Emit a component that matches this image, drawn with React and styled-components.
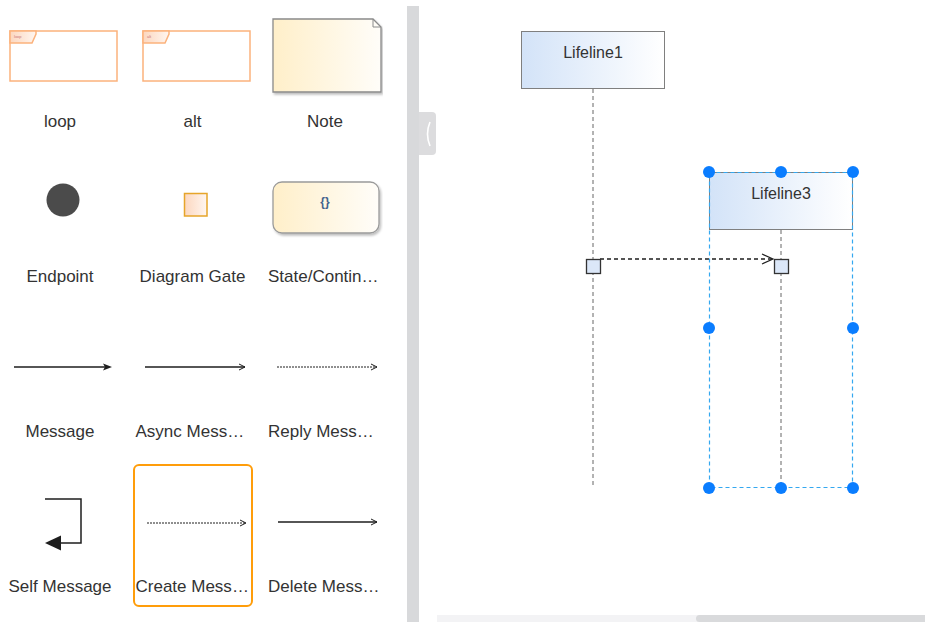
import React from 'react'
import styled, { createGlobalStyle } from 'styled-components'

const GlobalStyle = createGlobalStyle`
  html, body {
    margin: 0;
    padding: 0;
    background: #fff;
  }
  body {
    font-family: "Liberation Sans", Arial, sans-serif;
  }
`

const Shell = styled.div`
  display: flex;
  width: 925px;
  height: 622px;
  overflow: hidden;
  background: #fff;
`

const Palette = styled.div`
  width: 407px;
  flex-shrink: 0;
  overflow: hidden;
`

const Grid = styled.div`
  display: grid;
  grid-template-columns: repeat(3, 120px);
  grid-auto-rows: 143px;
  column-gap: 12.5px;
  row-gap: 12px;
  margin-top: -1px;
`

const Tile = styled.div`
  box-sizing: border-box;
  display: flex;
  flex-direction: column;
  border: 2px solid ${p => (p.$selected ? '#ff9d0a' : 'transparent')};
  border-radius: 6px;
  > svg {
    display: block;
    flex-shrink: 0;
  }
`

const Label = styled.div`
  height: 35px;
  line-height: 34px;
  padding: 0 1px;
  font-size: 17px;
  color: #333;
  text-align: center;
  white-space: nowrap;
  overflow: hidden;
  text-overflow: ellipsis;
`

const Splitter = styled.div`
  width: 12px;
  margin-top: 6px;
  flex-shrink: 0;
  background: #d8d9db;
`

const Canvas = styled.div`
  position: relative;
  flex: 1;
  display: flex;
  flex-direction: column;
`

const Stage = styled.div`
  position: relative;
  flex: 1;
`

const ScrollTrack = styled.div`
  display: flex;
  height: 7px;
  margin-left: 18px;
  background: #f3f3f5;
`

const ScrollThumb = styled.div`
  margin-left: 259px;
  flex: 1;
  background: #d9dadc;
  border-radius: 4px 0 0 4px;
`

const CollapseTab = styled.div`
  position: absolute;
  left: 0;
  top: 112px;
  width: 17px;
  height: 43px;
  background: #dcdcde;
  border-radius: 0 4px 4px 0;
  display: flex;
  align-items: center;
  justify-content: center;
`

const LifelineWrap = styled.div`
  position: absolute;
  display: flex;
  flex-direction: column;
  align-items: center;
  width: 144px;
  svg {
    display: block;
  }
`

const LifelineHead = styled.div`
  box-sizing: border-box;
  width: 144px;
  height: 58px;
  padding-top: 11px;
  border: 1px solid #7f7f7f;
  background: linear-gradient(to right, #d3e3f8, #ffffff);
  font-size: 16px;
  line-height: 20px;
  color: #333;
  text-align: center;
`

const Selection = styled.div`
  position: absolute;
  > svg {
    position: absolute;
    left: -1px;
    top: -1px;
    overflow: visible;
  }
`

const Handle = styled.span`
  position: absolute;
  width: 12px;
  height: 12px;
  margin: -6px 0 0 -6px;
  border-radius: 50%;
  background: #0a7dff;
`

const Overlay = styled.svg`
  position: absolute;
  left: 0;
  top: 0;
  pointer-events: none;
`

const INK = '#1e1e1e'

const Icon = ({ children }) => (
  <svg width="116" height="104" viewBox="2 2 116 104">
    <defs>
      <linearGradient id="warm" x1="0" x2="1" y1="0" y2="0">
        <stop offset="0" stopColor="#ffefc9" />
        <stop offset="1" stopColor="#fffdf9" />
      </linearGradient>
      <linearGradient id="peach" x1="0" x2="1" y1="0" y2="0">
        <stop offset="0" stopColor="#fcd7bf" />
        <stop offset="1" stopColor="#fff6f0" />
      </linearGradient>
      <filter id="soft" x="-10%" y="-10%" width="130%" height="140%">
        <feDropShadow dx="1.5" dy="2" stdDeviation="1" floodColor="#000" floodOpacity="0.25" />
      </filter>
    </defs>
    {children}
  </svg>
)

const Fragment = ({ tag }) => (
  <Icon>
    <rect x="10" y="32" width="107" height="50" fill="#fff" stroke="#fbb27c" strokeWidth="1.5" />
    <path d="M10 32 H36 V35 L32 44 H10 Z" fill="url(#peach)" stroke="#fbb27c" strokeWidth="1.5" />
    <text x="14" y="38.5" fontSize="4" fill="#c77">{tag}</text>
  </Icon>
)

const Arrow = ({ y, from, to, dotted, filled }) => (
  <Icon>
    <line
      x1={from}
      y1={y}
      x2={filled ? to - 6 : to}
      y2={y}
      stroke={INK}
      strokeWidth={dotted ? 1 : 1.5}
      strokeDasharray={dotted ? '2 1' : undefined}
    />
    {filled ? (
      <path d={`M${to} ${y} L${to - 9} ${y - 3.5} L${to - 7} ${y} L${to - 9} ${y + 3.5} Z`} fill={INK} />
    ) : (
      <path d={`M${to - 6} ${y - 3} L${to} ${y} L${to - 6} ${y + 3}`} fill="none" stroke={INK} strokeWidth="1" />
    )}
  </Icon>
)

const items = [
  { name: 'loop', icon: <Fragment tag="loop" /> },
  { name: 'alt', icon: <Fragment tag="alt" /> },
  {
    name: 'Note',
    icon: (
      <Icon>
        <g filter="url(#soft)">
          <path d="M8 20 H108 L116 28 V93 H8 Z" fill="url(#warm)" stroke="#8a8a8a" strokeWidth="1.3" />
        </g>
        <path d="M108 20 V28 H116" fill="none" stroke="#8a8a8a" strokeWidth="1" />
      </Icon>
    ),
  },
  {
    name: 'Endpoint',
    icon: (
      <Icon>
        <circle cx="63" cy="46" r="16.5" fill="#4b4b4b" />
      </Icon>
    ),
  },
  {
    name: 'Diagram Gate',
    icon: (
      <Icon>
        <rect x="51.5" y="39.5" width="22.5" height="22.5" fill="url(#peach)" stroke="#e6a52a" strokeWidth="1.5" />
      </Icon>
    ),
  },
  {
    name: 'State/Continuation',
    icon: (
      <Icon>
        <rect x="8" y="28" width="106" height="51" rx="9" fill="url(#warm)" stroke="#9a9a9a" strokeWidth="1.3" filter="url(#soft)" />
        <text x="60" y="52" fontSize="12" fontWeight="bold" textAnchor="middle" fill="#41628c">{'{}'}</text>
      </Icon>
    ),
  },
  { name: 'Message', icon: <Arrow y={58} from={14} to={112} filled /> },
  { name: 'Async Message', icon: <Arrow y={58} from={12} to={112} /> },
  { name: 'Reply Message', icon: <Arrow y={58} from={12} to={112} dotted /> },
  {
    name: 'Self Message',
    icon: (
      <Icon>
        <path d="M45 35 H81 V79 H58" fill="none" stroke={INK} strokeWidth="1.5" />
        <path d="M45 79 L61 71.5 L61 86.5 Z" fill={INK} />
      </Icon>
    ),
  },
  { name: 'Create Message', icon: <Arrow y={59} from={14} to={113} dotted />, selected: true },
  { name: 'Delete Message', icon: <Arrow y={58} from={13} to={112} /> },
]

const Lifeline = ({ x, y, title, stem }) => (
  <LifelineWrap style={{ left: x, top: y }}>
    <LifelineHead>{title}</LifelineHead>
    <svg width="2" height={stem}>
      <line x1="1" y1="0" x2="1" y2={stem} stroke="#666" strokeWidth="1" strokeDasharray="4 3" />
    </svg>
  </LifelineWrap>
)

const handles = [
  [0, 0], [50, 0], [100, 0],
  [0, 49.5], [100, 49.5],
  [0, 100], [50, 100], [100, 100],
]

const App = () => (
  <>
    <GlobalStyle />
    <Shell>
      <Palette>
        <Grid>
          {items.map(item => (
            <Tile key={item.name} $selected={item.selected}>
              {item.icon}
              <Label>{item.name}</Label>
            </Tile>
          ))}
        </Grid>
      </Palette>
      <Splitter />
      <Canvas>
        <Stage>
          <Lifeline x={102} y={31} title="Lifeline1" stem={398} />
          <Lifeline x={290} y={172} title="Lifeline3" stem={257} />
          <Overlay width="506" height="615">
            <line x1="181" y1="259" x2="354" y2="259" stroke={INK} strokeWidth="1.5" strokeDasharray="4 3" />
            <path d="M343 254 L354 259 L343 264" fill="none" stroke={INK} strokeWidth="1.2" />
            <rect x="167.5" y="259.5" width="14" height="14" fill="#dbe7f8" stroke="#333" strokeWidth="1.3" />
            <rect x="355.5" y="259.5" width="14" height="14" fill="#dbe7f8" stroke="#333" strokeWidth="1.3" />
          </Overlay>
          <Selection style={{ left: 290, top: 172, width: 144, height: 316 }}>
            <svg width="146" height="318">
              <rect x="1.5" y="1.5" width="143" height="315" fill="none" stroke="#34a8f0" strokeWidth="1.2" strokeDasharray="4 3" />
            </svg>
            {handles.map(([hx, hy]) => (
              <Handle key={`${hx}-${hy}`} style={{ left: `${hx}%`, top: `${hy}%` }} />
            ))}
          </Selection>
          <CollapseTab>
            <svg width="8" height="26" viewBox="0 0 8 26">
              <path d="M6 1 Q1 13 6 25" fill="none" stroke="#fff" strokeWidth="1.6" />
            </svg>
          </CollapseTab>
        </Stage>
        <ScrollTrack>
          <ScrollThumb />
        </ScrollTrack>
      </Canvas>
    </Shell>
  </>
)

export default App
